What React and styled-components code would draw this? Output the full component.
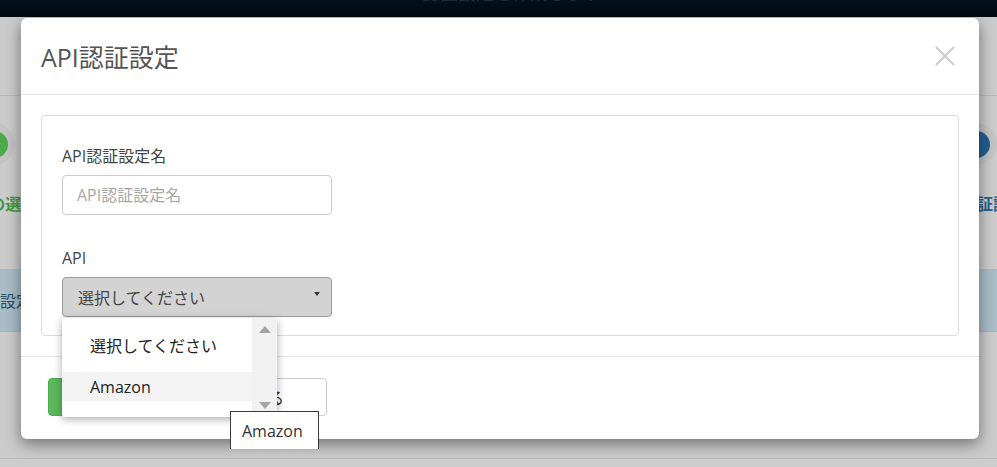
import React from 'react';
import styled, { createGlobalStyle } from 'styled-components';

const GlobalStyle = createGlobalStyle`
  html, body {
    margin: 0;
    padding: 0;
    background: #cbcbcb;
    overflow: hidden;
    font-family: "Open Sans", "Noto Sans CJK JP", sans-serif;
  }
`;

const Page = styled.div`
  position: relative;
  width: 997px;
  height: 467px;
  overflow: hidden;
  background: #cbcbcb;
`;

const TopBar = styled.div`
  height: 17px;
  background: linear-gradient(#02121c, #01090f);
  display: flex;
  justify-content: center;
  overflow: hidden;
`;

const TopTitle = styled.div`
  margin-top: -17px;
  font-size: 18px;
  line-height: 20px;
  color: #1e2b33;
`;

const TopRule = styled.div`
  height: 78px;
  border-bottom: 1px solid #b7b7b7;
`;

const Steps = styled.div`
  display: flex;
  justify-content: space-between;
  margin: 27px -19px 0 -46px;
`;

const Step = styled.div`
  width: 80px;
  display: flex;
  flex-direction: column;
  align-items: center;
`;

const Ring = styled.div`
  width: 42px;
  height: 42px;
  border-radius: 50%;
  background: #c3c3c3;
  display: flex;
  align-items: center;
  justify-content: center;
`;

const Dot = styled.div`
  width: 27px;
  height: 27px;
  border-radius: 50%;
  background: ${(p) => p.color};
`;

const StepLabel = styled.div`
  margin-top: 26px;
  transform: translateX(${(p) => p.shift || 0}px);
  font-size: 16px;
  font-weight: bold;
  white-space: nowrap;
  color: ${(p) => p.color};
`;

const Band = styled.div`
  margin-top: 54px;
  height: 62px;
  background: #a9bdc7;
  border-bottom: 1px solid #9fb6c0;
  display: flex;
  align-items: center;
  font-size: 16px;
  color: #2d4f66;
  white-space: nowrap;
`;

const BottomRule = styled.div`
  position: absolute;
  left: 0;
  right: 0;
  top: 458px;
  border-top: 1px solid #b9b9b9;
  height: 9px;
  background: #cdcdcd;
`;

const Modal = styled.div`
  position: absolute;
  left: 21px;
  top: 18px;
  width: 958px;
  height: 421px;
  background: #fff;
  border-radius: 6px;
  box-shadow: 0 5px 15px rgba(0, 0, 0, 0.45);
  display: flex;
  flex-direction: column;
`;

const Header = styled.div`
  height: 76px;
  border-bottom: 1px solid #e5e5e5;
  display: flex;
  align-items: center;
  justify-content: space-between;
  padding: 0 22px 0 20px;
`;

const Title = styled.h4`
  margin: 0;
  font-size: 25px;
  font-weight: normal;
  color: #555;
`;

const Close = styled.button`
  border: 0;
  background: none;
  padding: 0;
  width: 24px;
  height: 24px;
  display: flex;
  align-items: center;
  justify-content: center;
`;

const Body = styled.div`
  flex: 1;
  padding: 20px 20px;
  border-bottom: 1px solid #e5e5e5;
`;

const Panel = styled.div`
  border: 1px solid #dcdcdc;
  border-radius: 4px;
  padding: 29px 20px 20px;
  height: 221px;
  box-sizing: border-box;
`;

const Group = styled.div`
  margin-bottom: ${(p) => p.gap || 0}px;
`;

const Label = styled.label`
  display: block;
  font-size: 16px;
  line-height: 22px;
  color: #444;
  margin-bottom: 8px;
`;

const Input = styled.input`
  box-sizing: border-box;
  width: 270px;
  height: 40px;
  border: 1px solid #ccc;
  border-radius: 4px;
  padding: 0 14px;
  font-family: inherit;
  font-size: 16px;
  color: #555;
  outline: none;
  &::placeholder {
    color: #a6a6a6;
  }
`;

const SelectBox = styled.div`
  box-sizing: border-box;
  width: 270px;
  height: 40px;
  border: 1px solid #9a9a9a;
  border-radius: 4px;
  background: #d3d3d3;
  padding: 0 11px 0 15px;
  display: flex;
  align-items: center;
  justify-content: space-between;
  font-size: 16px;
  color: #444;
`;

const Caret = styled.svg`
  margin-top: -6px;
`;

const Footer = styled.div`
  height: 82px;
  box-sizing: border-box;
  padding: 21px 27px;
  display: flex;
  gap: 10px;
`;

const Button = styled.button`
  height: 38px;
  width: ${(p) => p.w}px;
  border-radius: 4px;
  font-family: inherit;
  font-size: 16px;
  border: 1px solid ${(p) => (p.primary ? '#4cae4c' : '#ccc')};
  background: ${(p) => (p.primary ? '#5cb85c' : '#fff')};
  color: ${(p) => (p.primary ? '#fff' : '#333')};
  padding: 0;
  text-align: center;
`;

const Dropdown = styled.div`
  position: absolute;
  left: 62px;
  top: 318px;
  width: 215px;
  height: 99px;
  background: #fff;
  border-radius: 3px;
  box-shadow: 0 2px 8px rgba(0, 0, 0, 0.35);
  display: flex;
  overflow: hidden;
`;

const Options = styled.div`
  flex: 1;
  display: flex;
  flex-direction: column;
`;

const Option = styled.div`
  height: ${(p) => p.h}px;
  display: flex;
  align-items: center;
  padding-left: 28px;
  font-size: 16px;
  color: #222;
  background: ${(p) => (p.active ? '#f3f3f3' : '#fff')};
`;

const Scrollbar = styled.div`
  width: 25px;
  background: #f1f1f1;
  display: flex;
  flex-direction: column;
  justify-content: space-between;
  align-items: center;
  padding: 8px 0 8px;
`;

const Tooltip = styled.div`
  position: absolute;
  left: 230px;
  top: 411px;
  width: 89px;
  height: 38px;
  box-sizing: border-box;
  background: #fff;
  border: 1px solid #3a3a3a;
  border-bottom: 0;
  padding: 8px 0 0 11px;
  font-size: 16px;
  color: #333;
`;

const Arrow = ({ up }) => (
  <svg width="12" height="7" viewBox="0 0 12 7">
    <path d={up ? 'M0 7 L6 0 L12 7 Z' : 'M0 0 L6 7 L12 0 Z'} fill="#a3a3a3" />
  </svg>
);

export default function App() {
  return (
    <>
      <GlobalStyle />
      <Page>
        <TopBar>
          <TopTitle>API認証設定を作成します</TopTitle>
        </TopBar>
        <TopRule />
        <Steps>
          <Step>
            <Ring><Dot color="#4caa4c" /></Ring>
            <StepLabel color="#3f9a3f" shift={6}>APIの選択</StepLabel>
          </Step>
          <Step>
            <Ring><Dot color="#235f91" /></Ring>
            <StepLabel color="#2b5f8a" shift={17}>認証設定</StepLabel>
          </Step>
        </Steps>
        <Band>設定</Band>
        <BottomRule />

        <Modal>
          <Header>
            <Title>API認証設定</Title>
            <Close>
              <svg width="20" height="20" viewBox="0 0 20 20">
                <path d="M1 1 L19 19 M19 1 L1 19" stroke="#cfcfcf" strokeWidth="2.4" />
              </svg>
            </Close>
          </Header>
          <Body>
            <Panel>
              <Group gap={32}>
                <Label>API認証設定名</Label>
                <Input placeholder="API認証設定名" />
              </Group>
              <Group>
                <Label>API</Label>
                <SelectBox>
                  <span>選択してください</span>
                  <Caret width="6" height="4" viewBox="0 0 6 4">
                    <path d="M0 0 L6 0 L3 4 Z" fill="#333" />
                  </Caret>
                </SelectBox>
              </Group>
            </Panel>
          </Body>
          <Footer>
            <Button primary w={135}>保存</Button>
            <Button w={134}>閉じる</Button>
          </Footer>
        </Modal>

        <Dropdown>
          <Options>
            <Option h={54}>選択してください</Option>
            <Option h={29} active>Amazon</Option>
          </Options>
          <Scrollbar>
            <Arrow up />
            <Arrow />
          </Scrollbar>
        </Dropdown>
        <Tooltip>Amazon</Tooltip>
      </Page>
    </>
  );
}
